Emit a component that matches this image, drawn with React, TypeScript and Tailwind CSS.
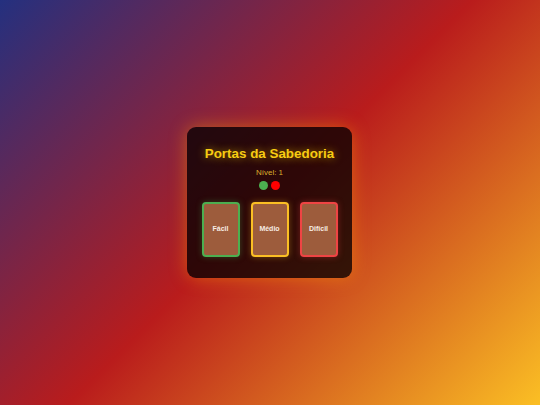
import React from "react";

export default function App() {
  const doors = [
    { label: "Fácil", border: "border-[#4caf50]", shadow: "shadow-[0_0_6px_rgba(76,175,80,0.35)]" },
    { label: "Médio", border: "border-[#fbbf24]", shadow: "shadow-[0_0_6px_rgba(251,191,36,0.35)]" },
    { label: "Difícil", border: "border-[#ef4444]", shadow: "shadow-[0_0_6px_rgba(239,68,68,0.35)]" },
  ];
  return (
    <div
      className="w-[540px] h-[405px] flex items-center justify-center bg-[linear-gradient(135deg,#24307f_0%,#b91c1c_50%,#fbbf24_100%)]"
      style={{ fontFamily: '"Liberation Sans", Arial, sans-serif' }}
    >
      <div className="w-[165px] h-[151px] rounded-[9px] bg-black/75 shadow-[0_0_18px_rgba(255,165,0,0.45)] flex flex-col items-center pt-[17px] ml-[-1px]">
        <div className="text-[13.4px] leading-[20px] font-bold text-[#f7cc12] [text-shadow:0_0_8px_rgba(255,215,0,0.6)]">
          Portas da Sabedoria
        </div>
        <div className="mt-[3px] text-[8px] leading-[12px] text-[#dcae2c]">Nível: 1</div>
        <div className="mt-[2px] flex gap-[3px]">
          <div className="w-[9px] h-[9px] rounded-full bg-[#4caf50]" />
          <div className="w-[9px] h-[9px] rounded-full bg-[#ff0000]" />
        </div>
        <div className="mt-[12px] flex gap-[11px]">
          {doors.map((d) => (
            <div
              key={d.label}
              className={`w-[38px] h-[55px] rounded-[4px] border-2 ${d.border} ${d.shadow} bg-[#9d5c3c] flex items-center justify-center text-[7px] font-bold text-[#f7ece4]`}
            >
              {d.label}
            </div>
          ))}
        </div>
      </div>
    </div>
  );
}
